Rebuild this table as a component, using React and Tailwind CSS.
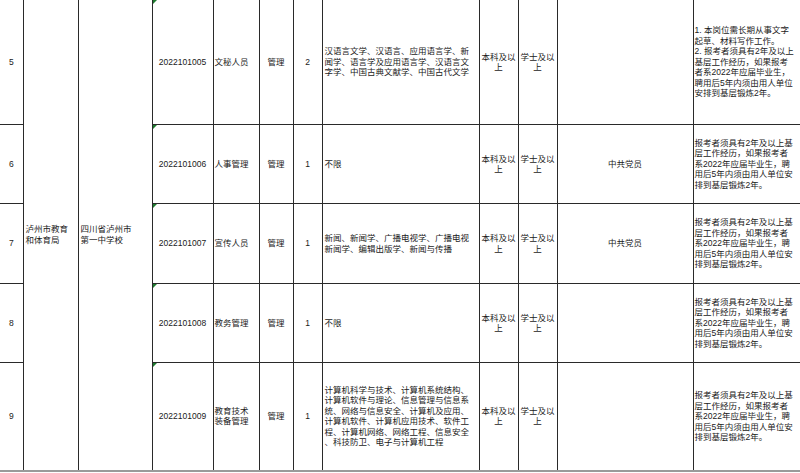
const widths = [23, 55, 74, 61, 46, 34, 29, 157, 39, 39, 136, 107];

const note =
  "报考者须具有2年及以上基\n层工作经历，如果报考者\n系2022年应届毕业生，聘\n用后5年内须由用人单位安\n排到基层锻炼2年。";

const rows = [
  {
    no: "5",
    code: "2022101005",
    name: "文秘人员",
    type: "管理",
    count: "2",
    major: "汉语言文学、汉语言、应用语言学、新\n闻学、语言学及应用语言学、汉语言文\n字学、中国古典文献学、中国古代文学",
    other: "",
    note: "1. 本岗位需长期从事文字\n起草、材料写作工作。\n2. 报考者须具有2年及以上\n基层工作经历，如果报考\n者系2022年应届毕业生，\n聘用后5年内须由用人单位\n安排到基层锻炼2年。",
    h: 125,
  },
  { no: "6", code: "2022101006", name: "人事管理", type: "管理", count: "1", major: "不限", other: "中共党员", note, h: 79 },
  {
    no: "7",
    code: "2022101007",
    name: "宣传人员",
    type: "管理",
    count: "1",
    major: "新闻、新闻学、广播电视学、广播电视\n新闻学、编辑出版学、新闻与传播",
    other: "中共党员",
    note,
    h: 80,
  },
  { no: "8", code: "2022101008", name: "教务管理", type: "管理", count: "1", major: "不限", other: "", note, h: 79 },
  {
    no: "9",
    code: "2022101009",
    name: "教育技术\n装备管理",
    type: "管理",
    count: "1",
    major:
      "计算机科学与技术、计算机系统结构、\n计算机软件与理论、信息管理与信息系\n统、网络与信息安全、计算机及应用、\n计算机软件、计算机应用技术、软件工\n程、计算机网络、网络工程、信息安全\n、科技防卫、电子与计算机工程",
    other: "",
    note,
    h: 108,
  },
];

const td = "border border-[#2a2a2a] align-middle p-0 whitespace-pre-line";

export default function App() {
  return (
    <div
      className="w-[800px] h-[473px] bg-white overflow-hidden text-[8.5px] leading-[10.5px] text-[#1a1a1a]"
      style={{ fontFamily: '"Liberation Sans", "Noto Sans CJK SC", sans-serif' }}
    >
      <table className="table-fixed border-collapse w-[800px] -mt-px border-b-2 border-b-[#9a9a9a]">
        <colgroup>
          {widths.map((w, i) => (
            <col key={i} style={{ width: w }} />
          ))}
        </colgroup>
        <tbody>
          {rows.map((r, i) => (
            <tr key={r.no} style={{ height: r.h }}>
              <td className={`${td} text-center border-l-0`}>{r.no}</td>
              {i === 0 && (
                <>
                  <td rowSpan={5} className={`${td} pl-[2px]`}>
                    {"泸州市教育\n和体育局"}
                  </td>
                  <td rowSpan={5} className={`${td} pl-[2px]`}>
                    {"四川省泸州市\n第一中学校"}
                  </td>
                </>
              )}
              <td className={`${td} text-center relative border-l-[#111] text-[8.5px]`}>
                <span className="absolute left-0 top-0 w-0 h-0 border-t-[4px] border-t-[#1e7a2e] border-r-[4px] border-r-transparent" />
                {r.code}
              </td>
              <td className={`${td} pl-[1px]`}>{r.name}</td>
              <td className={`${td} text-center`}>{r.type}</td>
              <td className={`${td} text-center`}>{r.count}</td>
              <td className={`${td} pl-[2px]`}>{r.major}</td>
              <td className={`${td} text-center`}>{"本科及以\n上"}</td>
              <td className={`${td} text-center`}>{"学士及以\n上"}</td>
              <td className={`${td} text-center`}>{r.other}</td>
              <td className={`${td} pl-[1px] border-r-0`}>{r.note}</td>
            </tr>
          ))}
        </tbody>
      </table>
    </div>
  );
}
